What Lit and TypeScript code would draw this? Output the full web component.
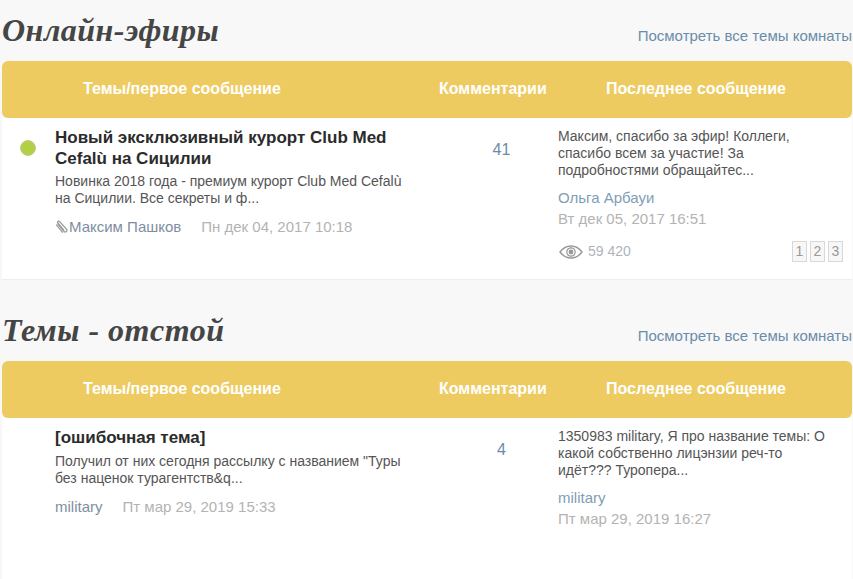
import { html, LitElement, css, nothing } from 'lit';
import { customElement, property } from 'lit/decorators.js';

type Topic = {
  title: string;
  online?: boolean;
  attachment?: boolean;
  excerpt: string;
  author: string;
  date: string;
  comments: string;
  lastText: string;
  lastAuthor: string;
  lastDate: string;
  views?: string;
  pages?: string[];
};

@customElement('forum-section')
class ForumSection extends LitElement {
  static styles = css`
    :host {
      display: block;
    }
    .head {
      display: flex;
      justify-content: space-between;
      align-items: center;
      height: 61px;
    }
    h2 {
      margin: -1px 0 0;
      font: italic bold 32px/34px 'Liberation Serif', serif;
      letter-spacing: 0.5px;
      color: #454545;
    }
    .all {
      font-size: 15px;
      color: #6a8caa;
      margin-top: 10px;
    }
    .bar {
      display: flex;
      align-items: center;
      height: 57px;
      padding-left: 81px;
      padding-bottom: 2px;
      box-sizing: border-box;
      background: #eecb60;
      border-radius: 6px;
      color: #fff;
      font-size: 16px;
      font-weight: bold;
    }
    .bar .c1 {
      width: 356px;
    }
    .bar .c2 {
      width: 167px;
    }
    .row {
      display: grid;
      grid-template-columns: 53px 360px 143px 1fr;
      height: 161px;
      padding-top: 9px;
      box-sizing: border-box;
      background: #fff;
    }
    .dot {
      width: 16px;
      height: 16px;
      margin: 13px 0 0 18px;
      border-radius: 50%;
      background: #b1d044;
      box-sizing: border-box;
      border: 1px solid #c3ca9e;
    }
    .title {
      margin-top: 1px;
      font-size: 17px;
      line-height: 20.5px;
      font-weight: bold;
      color: #2b2b2b;
    }
    .excerpt {
      margin-top: 4px;
      font-size: 14px;
      line-height: 17px;
      color: #555;
    }
    .meta {
      display: flex;
      align-items: center;
      margin-top: 10px;
      font-size: 15px;
      line-height: 20px;
      color: #7e8ea0;
    }
    .meta svg {
      margin-right: 1px;
    }
    .date {
      margin-left: 20px;
      color: #b3b3b3;
    }
    .count {
      padding: 13px 0 0 30px;
      text-align: center;
      font-size: 16px;
      line-height: 20px;
      color: #6a8caa;
    }
    .last {
      padding: 1px 9px 0 0;
      font-size: 14px;
      line-height: 17px;
      color: #555;
    }
    .last-text {
      max-width: 275px;
    }
    .last-author {
      margin-top: 9px;
      font-size: 15px;
      line-height: 20px;
      color: #7f9db5;
    }
    .last-date {
      margin-top: 1px;
      font-size: 15px;
      line-height: 20px;
      color: #b3b3b3;
    }
    .foot {
      display: flex;
      align-items: center;
      justify-content: space-between;
      margin-top: 12px;
      color: #aeb4ba;
      font-size: 14px;
    }
    .views {
      display: flex;
      align-items: center;
      gap: 5px;
      margin-left: 1px;
    }
    .pages {
      display: flex;
      gap: 3px;
    }
    .pages span {
      width: 15px;
      height: 21px;
      box-sizing: border-box;
      border: 1px solid #d8d8d8;
      background: #f7f7f7;
      text-align: center;
      line-height: 18px;
      color: #999;
    }
  `;

  @property()
  heading = '';

  @property({ type: Object })
  topic!: Topic;

  render() {
    const t = this.topic;
    return html`
      <div class="head">
        <h2>${this.heading}</h2>
        <span class="all">Посмотреть все темы комнаты</span>
      </div>
      <div class="bar">
        <span class="c1">Темы/первое сообщение</span>
        <span class="c2">Комментарии</span>
        <span>Последнее сообщение</span>
      </div>
      <div class="row">
        <div>${t.online ? html`<div class="dot"></div>` : nothing}</div>
        <div>
          <div class="title">${t.title}</div>
          <div class="excerpt">${t.excerpt}</div>
          <div class="meta">
            ${t.attachment
              ? html`<svg width="13" height="14" viewBox="0 0 13 14" fill="none" stroke="#9a9a9a" stroke-width="1.3">
                  <path d="M2.5 3.5l6.6 8a1.7 1.7 0 0 0 2.6-2.1L4.6 1.6a1.1 1.1 0 0 0-1.8 1.3l6.3 7.4" />
                  <path d="M1.2 4.6l6.6 8" />
                </svg>`
              : nothing}
            <span>${t.author}</span>
            <span class="date">${t.date}</span>
          </div>
        </div>
        <div class="count">${t.comments}</div>
        <div class="last">
          <div class="last-text">${t.lastText}</div>
          <div class="last-author">${t.lastAuthor}</div>
          <div class="last-date">${t.lastDate}</div>
          ${t.views
            ? html`<div class="foot">
                <span class="views">
                  <svg width="24" height="14" viewBox="0 0 24 14" fill="none" stroke="#999">
                    <path stroke-width="1.4" d="M1 7c3-4 7-6 11-6s8 2 11 6c-3 4-7 6-11 6S4 11 1 7z" />
                    <circle cx="12" cy="7" r="4.2" stroke-width="1.2" />
                    <circle cx="12" cy="7" r="2.4" fill="#999" stroke="none" />
                  </svg>
                  ${t.views}
                </span>
                <span class="pages">${t.pages?.map((p) => html`<span>${p}</span>`)}</span>
              </div>`
            : nothing}
        </div>
      </div>
    `;
  }
}

const online: Topic = {
  title: 'Новый эксклюзивный курорт Club Med Cefalù на Сицилии',
  online: true,
  attachment: true,
  excerpt: 'Новинка 2018 года - премиум курорт Club Med Cefalù на Сицилии. Все секреты и ф...',
  author: 'Максим Пашков',
  date: 'Пн дек 04, 2017 10:18',
  comments: '41',
  lastText: 'Максим, спасибо за эфир! Коллеги, спасибо всем за участие! За подробностями обращайтес...',
  lastAuthor: 'Ольга Арбауи',
  lastDate: 'Вт дек 05, 2017 16:51',
  views: '59 420',
  pages: ['1', '2', '3'],
};

const rubbish: Topic = {
  title: '[ошибочная тема]',
  excerpt: 'Получил от них сегодня рассылку с названием "Туры без наценок турагентств&q...',
  author: 'military',
  date: 'Пт мар 29, 2019 15:33',
  comments: '4',
  lastText: '1350983 military, Я про название темы: О какой собственно лицэнзии реч-то идёт??? Туропера...',
  lastAuthor: 'military',
  lastDate: 'Пт мар 29, 2019 16:27',
};

@customElement('app-root')
class AppRoot extends LitElement {
  static styles = css`
    :host {
      display: block;
      height: 579px;
      overflow: hidden;
      background: #f8f8f8;
      font-family: 'Liberation Sans', Arial, sans-serif;
    }
    .wrap {
      padding: 0 1px 0 2px;
    }
    .first {
      border-bottom: 1px solid #eee;
      margin-bottom: 20px;
    }
  `;

  render() {
    return html`
      <div class="wrap">
        <forum-section class="first" heading="Онлайн-эфиры" .topic=${online}></forum-section>
        <forum-section heading="Темы - отстой" .topic=${rubbish}></forum-section>
      </div>
    `;
  }
}

export default AppRoot;
export { ForumSection };
